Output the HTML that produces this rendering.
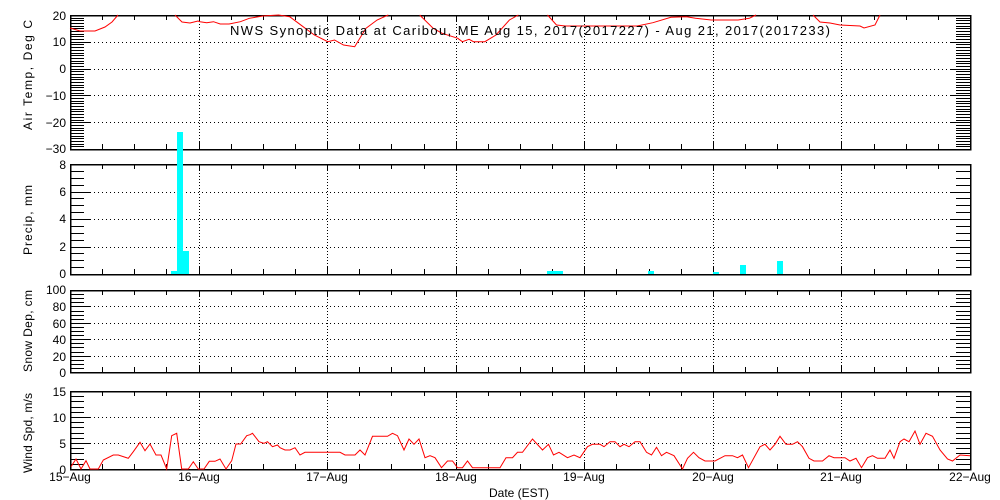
<!DOCTYPE html>
<html><head><meta charset="utf-8"><style>
html,body{margin:0;padding:0;background:#fff;width:1000px;height:500px;overflow:hidden}
svg{display:block}
text{font-family:"Liberation Sans",sans-serif;font-size:12px;fill:#000}
</style></head><body>
<svg id="s" width="1000" height="500" xmlns="http://www.w3.org/2000/svg">
<g id="g" shape-rendering="crispEdges"></g>
<rect x="177" y="132" width="6" height="142" fill="#00ffff"/>
<rect x="183" y="251" width="6" height="23" fill="#00ffff"/>
<rect x="171" y="271" width="6" height="3" fill="#00ffff"/>
<rect x="547" y="271" width="16" height="3" fill="#00ffff"/>
<rect x="648" y="271" width="6" height="3" fill="#00ffff"/>
<rect x="713" y="272" width="6" height="2" fill="#00ffff"/>
<rect x="740" y="265" width="6" height="9" fill="#00ffff"/>
<rect x="777" y="261" width="6" height="13" fill="#00ffff"/>
<g id="d" fill="none" stroke="#f00" stroke-width="1"></g>
<text x="230" y="35" style="font-size:13px" textLength="600" lengthAdjust="spacing">NWS Synoptic Data at Caribou, ME   Aug 15, 2017(2017227) - Aug 21, 2017(2017233)</text>
<g text-anchor="end">
<text x="66" y="20">20</text><text x="66" y="46">10</text><text x="66" y="73">0</text><text x="66" y="100">−10</text><text x="66" y="127">−20</text><text x="66" y="153">−30</text>
<text x="66" y="169">8</text><text x="66" y="196">6</text><text x="66" y="223">4</text><text x="66" y="251">2</text><text x="66" y="278">0</text>
<text x="66" y="294">100</text><text x="66" y="311">80</text><text x="66" y="328">60</text><text x="66" y="344">40</text><text x="66" y="361">20</text><text x="66" y="377">0</text>
<text x="66" y="396">15</text><text x="66" y="422">10</text><text x="66" y="448">5</text><text x="66" y="474">0</text>
</g>
<g text-anchor="middle">
<text x="70" y="481">15−Aug</text><text x="199" y="481">16−Aug</text><text x="327" y="481">17−Aug</text><text x="456" y="481">18−Aug</text><text x="584" y="481">19−Aug</text><text x="713" y="481">20−Aug</text><text x="841" y="481">21−Aug</text><text x="970" y="481">22−Aug</text>
<text x="519" y="497">Date (EST)</text>
</g>
<text transform="translate(32,130) rotate(-90)" textLength="110" lengthAdjust="spacing">Air Temp, Deg C</text>
<text transform="translate(32,255) rotate(-90)" textLength="70" lengthAdjust="spacing">Precip, mm</text>
<text transform="translate(32,372) rotate(-90)" textLength="82" lengthAdjust="spacing">Snow Dep, cm</text>
<text transform="translate(32,473) rotate(-90)" textLength="80" lengthAdjust="spacing">Wind Spd, m/s</text>
</svg>
<script>
var g=document.getElementById('g'),h='';
var L=70,R=970,dx=(R-L)/7;
function ln(x1,y1,x2,y2,extra){h+='<line x1="'+x1+'" y1="'+y1+'" x2="'+x2+'" y2="'+y2+'" stroke="#000" '+(extra||'')+'/>';}
var P=[[15,149,20,-30,[10,0,-10,-20],1],[164,274,8,0,[6,4,2],0.5],[290,372,100,0,[80,60,40,20],5],[391,469,15,0,[10,5],1]];
P.forEach(function(p){var t=p[0],b=p[1],hi=p[2],lo=p[3];
 function Y(v){return b-(v-lo)/(hi-lo)*(b-t);}
 for(var v=lo;v<=hi+1e-6;v+=p[5]){var y=Math.round(Y(v))+0.5;ln(L,y,L+14,y);ln(R-14,y,R,y);}
 p[4].forEach(function(v){var y=Math.round(Y(v))+0.5;ln(L,y,R,y,'stroke-dasharray="1,3"');ln(L,y,L+20,y);ln(R-20,y,R,y);});
 for(var i=1;i<7;i++){var x=Math.round(L+i*dx)+0.5;ln(x,t,x,b,'stroke-dasharray="1,2"');}
 for(var i=0;i<=28;i++){var x=Math.round(L+i*dx/4)+0.5;var l=(i%4==0)?7:5;ln(x,t,x,t+l);ln(x,b,x,b-l);}
 h+='<rect x="'+(L+0.5)+'" y="'+(t+0.5)+'" width="'+(R-L)+'" height="'+(b-t)+'" fill="none" stroke="#000" stroke-width="1.5"/>';
});
g.innerHTML=h;
function pl(a){return '<polyline points="'+a.map(function(p){return p[0].toFixed(1)+','+p[1].toFixed(1)}).join(' ')+'"/>';}
var d='';
d+=pl([[70,28],[80,31],[95,31],[105,27],[112,22],[118,15]]);
var z=[[0,65],[15,68],[30,65],[45,72],[65,72],[90,65],[110,55],[140,48],[175,45],[200,50],[215,65],[230,80],[255,105],[285,125],[300,120],[320,135],[345,140],[370,85],[380,75],[395,60],[420,45]];
d+=pl([[175,15],[182,22],[190,23],[198,21]].concat(z.map(function(p){return [200+p[0]/2.23,p[1]/3]})));
d+=pl([[490,45],[520,85],[540,100],[575,115],[585,125],[600,118],[610,125],[635,125],[660,105],[690,60],[710,45]].map(function(p){return [200+p[0]/2.23,p[1]/3]}));
d+=pl([[775,45],[795,75],[815,78],[870,78],[940,78],[975,78],[1010,68],[1050,52],[1085,50],[1105,55],[1140,60],[1200,60],[1225,55],[1240,45]].map(function(p){return [200+p[0]/2.23,p[1]/3]}));
d+=pl([[813,15],[820,22],[830,23],[840,25],[860,26],[864,28],[875,25],[880,15]]);
var w1=[[213,620],[228,597],[243,627],[258,602],[270,627],[295,627],[310,600],[340,585],[355,585],[385,595],[400,575],[420,547],[435,572],[450,552],[468,585],[483,585],[500,627],[515,527],[530,520],[545,627],[565,627],[580,605],[595,627],[612,627],[628,604],[645,604],[660,597],[678,627],[695,602],[708,552],[722,552],[740,527],[750,524]].map(function(p){return [p[0]/3,260+p[1]/3]});
var w2=[[105,115],[118,140],[128,145],[135,140],[145,155],[155,150],[160,158],[170,165],[180,165],[190,158],[200,180],[210,172],[280,172],[290,180],[310,180],[320,165],[330,180],[345,124],[375,124],[385,115],[395,122],[408,165],[418,132],[428,148],[438,132],[450,188],[460,182],[470,188],[483,218],[495,198],[505,198],[515,218],[525,218],[535,198],[545,218],[600,218],[612,188],[625,188],[635,172],[645,172],[665,132],[685,165],[697,148],[707,180],[718,172],[735,188],[748,180],[760,188],[775,155],[785,148],[800,148],[808,155],[820,140],[830,140],[840,155],[848,148],[858,155],[870,140],[880,140],[893,172],[903,180],[913,157],[923,182],[933,172],[948,182],[965,222],[975,190],[987,172],[998,188],[1010,198],[1030,198],[1050,182],[1065,182],[1075,188],[1085,180],[1097,218],[1120,155],[1130,148],[1140,165],[1150,148],[1160,124],[1172,148],[1185,148],[1195,140],[1205,155],[1218,190],[1228,198],[1245,198],[1258,182],[1268,188],[1290,188],[1300,198],[1312,190],[1323,218],[1335,188],[1345,182],[1355,190],[1370,190],[1380,165],[1388,190],[1400,140],[1408,132],[1418,140],[1430,108],[1440,148],[1452,115],[1465,124],[1480,165],[1495,192],[1505,198],[1520,180],[1540,182]].map(function(p){return [200+p[0]/2,395+p[1]/3]});
d+=pl(w1.concat(w2));
document.getElementById('d').innerHTML=d;
</script>
</body></html>
